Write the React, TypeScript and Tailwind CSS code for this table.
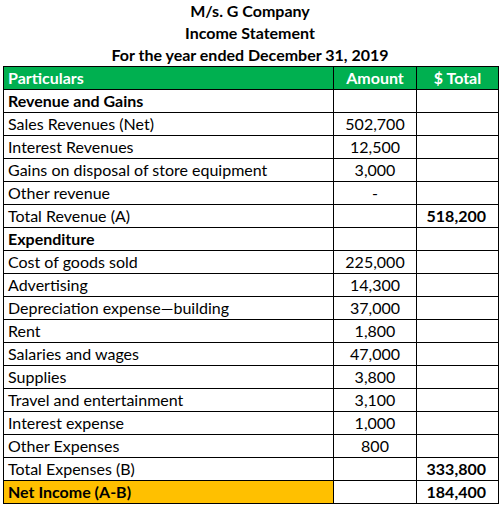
const rows: { label: string; amount?: string; total?: string; kind?: "head" | "total" | "net" }[] = [
  { label: "Revenue and Gains", kind: "head" },
  { label: "Sales Revenues (Net)", amount: "502,700" },
  { label: "Interest Revenues", amount: "12,500" },
  { label: "Gains on disposal of store equipment", amount: "3,000" },
  { label: "Other revenue", amount: "-" },
  { label: "Total Revenue (A)", total: "518,200", kind: "total" },
  { label: "Expenditure", kind: "head" },
  { label: "Cost of goods sold", amount: "225,000" },
  { label: "Advertising", amount: "14,300" },
  { label: "Depreciation expense\u2014building", amount: "37,000" },
  { label: "Rent", amount: "1,800" },
  { label: "Salaries and wages", amount: "47,000" },
  { label: "Supplies", amount: "3,800" },
  { label: "Travel and entertainment", amount: "3,100" },
  { label: "Interest expense", amount: "1,000" },
  { label: "Other Expenses", amount: "800" },
  { label: "Total Expenses (B)", total: "333,800", kind: "total" },
  { label: "Net Income (A-B)", total: "184,400", kind: "net" },
];

const App = () => {
  return (
    <main className="w-[500px] h-[507px] bg-white text-black font-['Lato',sans-serif] text-[16px]">
      <div className="flex flex-col items-center font-bold">
        <div className="h-[22px] leading-[22px]">M/s. G Company</div>
        <div className="h-[22px] leading-[22px]">Income Statement</div>
        <div className="h-[22px] leading-[22px]">For the year ended December 31, 2019</div>
      </div>
      <table className="ml-[3px] border-collapse table-fixed w-[495px]">
        <colgroup>
          <col className="w-[330px]" />
          <col className="w-[83px]" />
          <col className="w-[82px]" />
        </colgroup>
        <thead>
          <tr className="h-[23px] leading-[22px] bg-[#00b050] text-white font-bold">
            <th className="border border-black text-left pl-1 font-bold">Particulars</th>
            <th className="border border-black text-center font-bold">Amount</th>
            <th className="border border-black text-center font-bold">$ Total</th>
          </tr>
        </thead>
        <tbody>
          {rows.map((r) => (
            <tr key={r.label} className="h-[23px] leading-[22px]">
              <td
                className={`border border-black pl-1 ${r.kind === "head" || r.kind === "net" ? "font-bold" : ""} ${
                  r.kind === "net" ? "bg-[#ffc000]" : ""
                }`}
              >
                {r.label}
              </td>
              <td className="border border-black text-center">{r.amount}</td>
              <td className="border border-black text-right pr-[12px] font-bold">{r.total}</td>
            </tr>
          ))}
        </tbody>
      </table>
    </main>
  );
};

export default App;
